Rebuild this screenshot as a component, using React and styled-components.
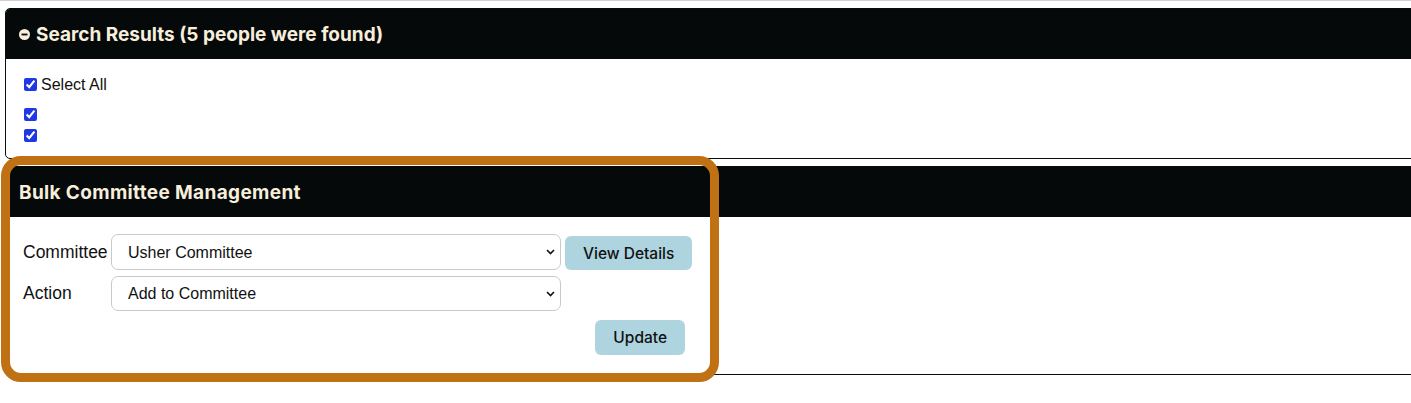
import React from "react";
import styled, { createGlobalStyle } from "styled-components";

const GlobalStyle = createGlobalStyle`
  html, body { margin: 0; padding: 0; background: #fff; overflow: hidden; }
  body { font-family: "Liberation Sans", Arial, sans-serif; color: #111; }
`;

const Page = styled.div`
  position: relative;
  height: 403px;
  box-sizing: border-box;
  border-top: 1px solid #cfcfcf;
  padding: 7px 0 0 5px;
  width: 1440px;
  display: flex;
  flex-direction: column;
  gap: 7px;
`;

const Panel = styled.section`
  width: 1420px;
  border: 1px solid #0b0b0b;
  border-radius: 5px;
  overflow: hidden;
  background: #fff;
`;

const PanelHeader = styled.header`
  height: 50px;
  background: #05090a;
  display: flex;
  align-items: center;
  gap: 6px;
  padding-left: 13px;
  color: #f7eedb;
  font-family: "Inter", "Open Sans", sans-serif;
  font-weight: 700;
  font-size: 19px;
  letter-spacing: ${(p) => p.$spacing || 0}px;
`;

const PanelBody = styled.div`
  height: ${(p) => p.$height}px;
  box-sizing: border-box;
  padding: ${(p) => p.$pad};
`;

const CheckRow = styled.label`
  display: flex;
  align-items: center;
  gap: 4px;
  height: ${(p) => p.$h || 21}px;
  font-size: 16px;
  margin-bottom: ${(p) => p.$mb || 0}px;
`;

const Check = styled.input.attrs({ type: "checkbox" })`
  width: 13px;
  height: 13px;
  margin: 0;
  accent-color: #1e38e6;
`;

const FormGrid = styled.div`
  display: grid;
  grid-template-columns: 84px 450px auto;
  column-gap: 4px;
  row-gap: 6px;
  align-items: center;
  width: max-content;
`;

const Label = styled.span`
  font-size: 17.5px;
  color: #111;
`;

const SelectWrap = styled.div`
  position: relative;
  height: ${(p) => p.$h}px;
`;

const Select = styled.select`
  appearance: none;
  width: 100%;
  height: 100%;
  box-sizing: border-box;
  border: 1px solid #c9c9c9;
  border-radius: 7px;
  background: #fff;
  padding: 0 30px 0 16px;
  font-family: "Liberation Sans", Arial, sans-serif;
  font-size: 16px;
  color: #111;
`;

const Chevron = styled.svg`
  position: absolute;
  right: 6px;
  top: 50%;
  transform: translateY(-50%);
  pointer-events: none;
`;

const Button = styled.button`
  background: #add4df;
  border: none;
  border-radius: 6px;
  font-family: "Inter", "Open Sans", sans-serif;
  font-weight: 500;
  font-size: 15.5px;
  color: #111;
  height: ${(p) => p.$h}px;
  padding: 0 ${(p) => p.$px}px;
  box-sizing: border-box;
  align-self: end;
`;

const Actions = styled.div`
  display: flex;
  justify-content: flex-end;
  width: 662px;
  margin-top: 9px;
`;

const Highlight = styled.div`
  position: absolute;
  left: 1px;
  top: 155px;
  width: 718px;
  height: 226px;
  box-sizing: border-box;
  border: 9px solid #bf7114;
  border-radius: 20px;
  pointer-events: none;
`;

const MinusIcon = () => (
  <svg width="11" height="11" viewBox="0 0 11 11">
    <circle cx="5.5" cy="5.5" r="5.5" fill="#f7eedb" />
    <rect x="2.5" y="4.6" width="6" height="1.8" fill="#05090a" />
  </svg>
);

const ChevronIcon = () => (
  <Chevron width="9" height="6" viewBox="0 0 9 6">
    <path d="M1 1l3.5 3.5L8 1" fill="none" stroke="#111" strokeWidth="1.6" />
  </Chevron>
);

const FormSelect = ({ value, h }) => (
  <SelectWrap $h={h}>
    <Select defaultValue={value}>
      <option>{value}</option>
    </Select>
    <ChevronIcon />
  </SelectWrap>
);

export default function App() {
  return (
    <>
      <GlobalStyle />
      <Page>
        <Panel>
          <PanelHeader>
            <MinusIcon />
            Search Results (5 people were found)
          </PanelHeader>
          <PanelBody $height={99} $pad="17px 0 0 18px">
            <CheckRow $h={17} $mb={11}>
              <Check defaultChecked />
              Select All
            </CheckRow>
            <CheckRow>
              <Check defaultChecked />
            </CheckRow>
            <CheckRow>
              <Check defaultChecked />
            </CheckRow>
          </PanelBody>
        </Panel>
        <Panel>
          <PanelHeader $spacing={0.35}>Bulk Committee Management</PanelHeader>
          <PanelBody $height={157} $pad="17px 0 0 17px">
            <FormGrid>
              <Label>Committee</Label>
              <FormSelect value="Usher Committee" h={36} />
              <Button $h={34} $px={18}>View Details</Button>
              <Label>Action</Label>
              <FormSelect value="Add to Committee" h={35} />
              <span />
            </FormGrid>
            <Actions>
              <Button $h={35} $px={18}>Update</Button>
            </Actions>
          </PanelBody>
        </Panel>
        <Highlight />
      </Page>
    </>
  );
}
